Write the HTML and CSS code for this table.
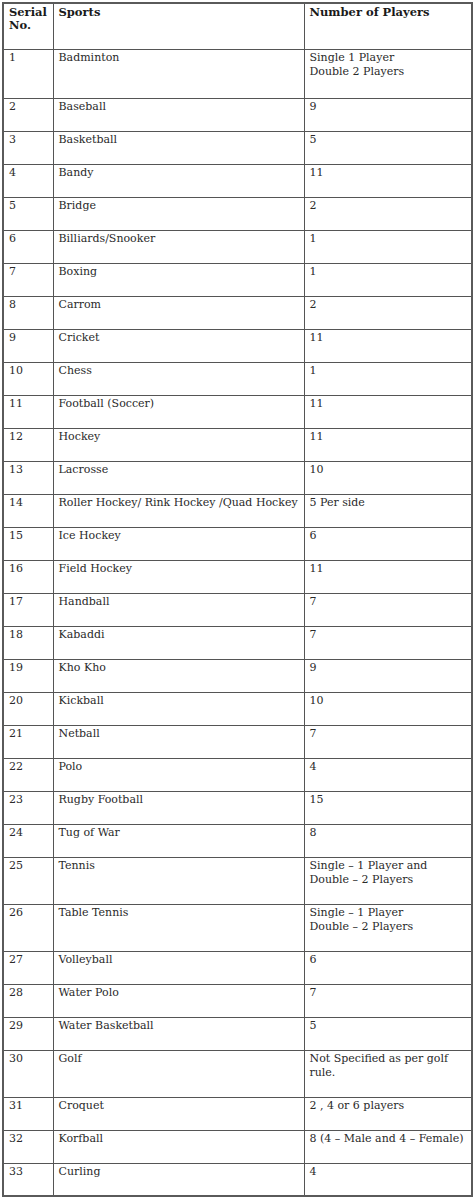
FILE: index.html
```
<!DOCTYPE html>
<html>
<head>
<meta charset="utf-8">
<link rel="stylesheet" href="styles.css">
</head>
<body>
<table class="sports">
<colgroup><col class="c-num"><col class="c-sport"><col class="c-players"></colgroup>
<tr class="r-head"><th>Serial No.</th><th>Sports</th><th>Number of Players</th></tr>
<tr class="r-tall1"><td>1</td><td>Badminton</td><td>Single 1 Player<br>Double 2 Players</td></tr>
<tr><td>2</td><td>Baseball</td><td>9</td></tr>
<tr><td>3</td><td>Basketball</td><td>5</td></tr>
<tr><td>4</td><td>Bandy</td><td>11</td></tr>
<tr><td>5</td><td>Bridge</td><td>2</td></tr>
<tr><td>6</td><td>Billiards/Snooker</td><td>1</td></tr>
<tr><td>7</td><td>Boxing</td><td>1</td></tr>
<tr><td>8</td><td>Carrom</td><td>2</td></tr>
<tr><td>9</td><td>Cricket</td><td>11</td></tr>
<tr><td>10</td><td>Chess</td><td>1</td></tr>
<tr><td>11</td><td>Football (Soccer)</td><td>11</td></tr>
<tr><td>12</td><td>Hockey</td><td>11</td></tr>
<tr><td>13</td><td>Lacrosse</td><td>10</td></tr>
<tr><td>14</td><td>Roller Hockey/ Rink Hockey /Quad Hockey</td><td>5 Per side</td></tr>
<tr><td>15</td><td>Ice Hockey</td><td>6</td></tr>
<tr><td>16</td><td>Field Hockey</td><td>11</td></tr>
<tr><td>17</td><td>Handball</td><td>7</td></tr>
<tr><td>18</td><td>Kabaddi</td><td>7</td></tr>
<tr><td>19</td><td>Kho Kho</td><td>9</td></tr>
<tr><td>20</td><td>Kickball</td><td>10</td></tr>
<tr><td>21</td><td>Netball</td><td>7</td></tr>
<tr><td>22</td><td>Polo</td><td>4</td></tr>
<tr><td>23</td><td>Rugby Football</td><td>15</td></tr>
<tr><td>24</td><td>Tug of War</td><td>8</td></tr>
<tr class="r-tall"><td>25</td><td>Tennis</td><td>Single – 1 Player and<br>Double – 2 Players</td></tr>
<tr class="r-tall"><td>26</td><td>Table Tennis</td><td>Single – 1 Player<br>Double – 2 Players</td></tr>
<tr><td>27</td><td>Volleyball</td><td>6</td></tr>
<tr><td>28</td><td>Water Polo</td><td>7</td></tr>
<tr><td>29</td><td>Water Basketball</td><td>5</td></tr>
<tr class="r-tall"><td>30</td><td>Golf</td><td>Not Specified as per golf<br>rule.</td></tr>
<tr><td>31</td><td>Croquet</td><td>2 , 4 or 6 players</td></tr>
<tr><td>32</td><td>Korfball</td><td>8 (4 – Male and 4 – Female)</td></tr>
<tr><td>33</td><td>Curling</td><td>4</td></tr>
</table>
</body>
</html>
```
FILE: styles.css
```
html, body {
  margin: 0;
  padding: 0;
  background: #ffffff;
}
body {
  padding: 2px 0 0 2px;
}
.sports {
  border-collapse: collapse;
  table-layout: fixed;
  width: 469px;
  border: 2px solid #5a5a5a;
  font-family: "DejaVu Serif", "Liberation Serif", serif;
  font-size: 11px;
  line-height: 14px;
  color: #2a2a2a;
}
.c-num { width: 50px; }
.c-sport { width: 251px; }
.c-players { width: 168px; }
.sports th,
.sports td {
  border: 1px solid #555555;
  vertical-align: top;
  text-align: left;
  padding: 1px 5px 0 5px;
  height: 33px;
  box-sizing: border-box;
}
.sports th {
  font-weight: bold;
  font-size: 11.5px;
  line-height: 13px;
  color: #1a1a1a;
  padding-top: 2px;
}
.r-head th { height: 46px; }
.r-tall1 td { height: 49px; }
.r-tall td { height: 47px; }
```
